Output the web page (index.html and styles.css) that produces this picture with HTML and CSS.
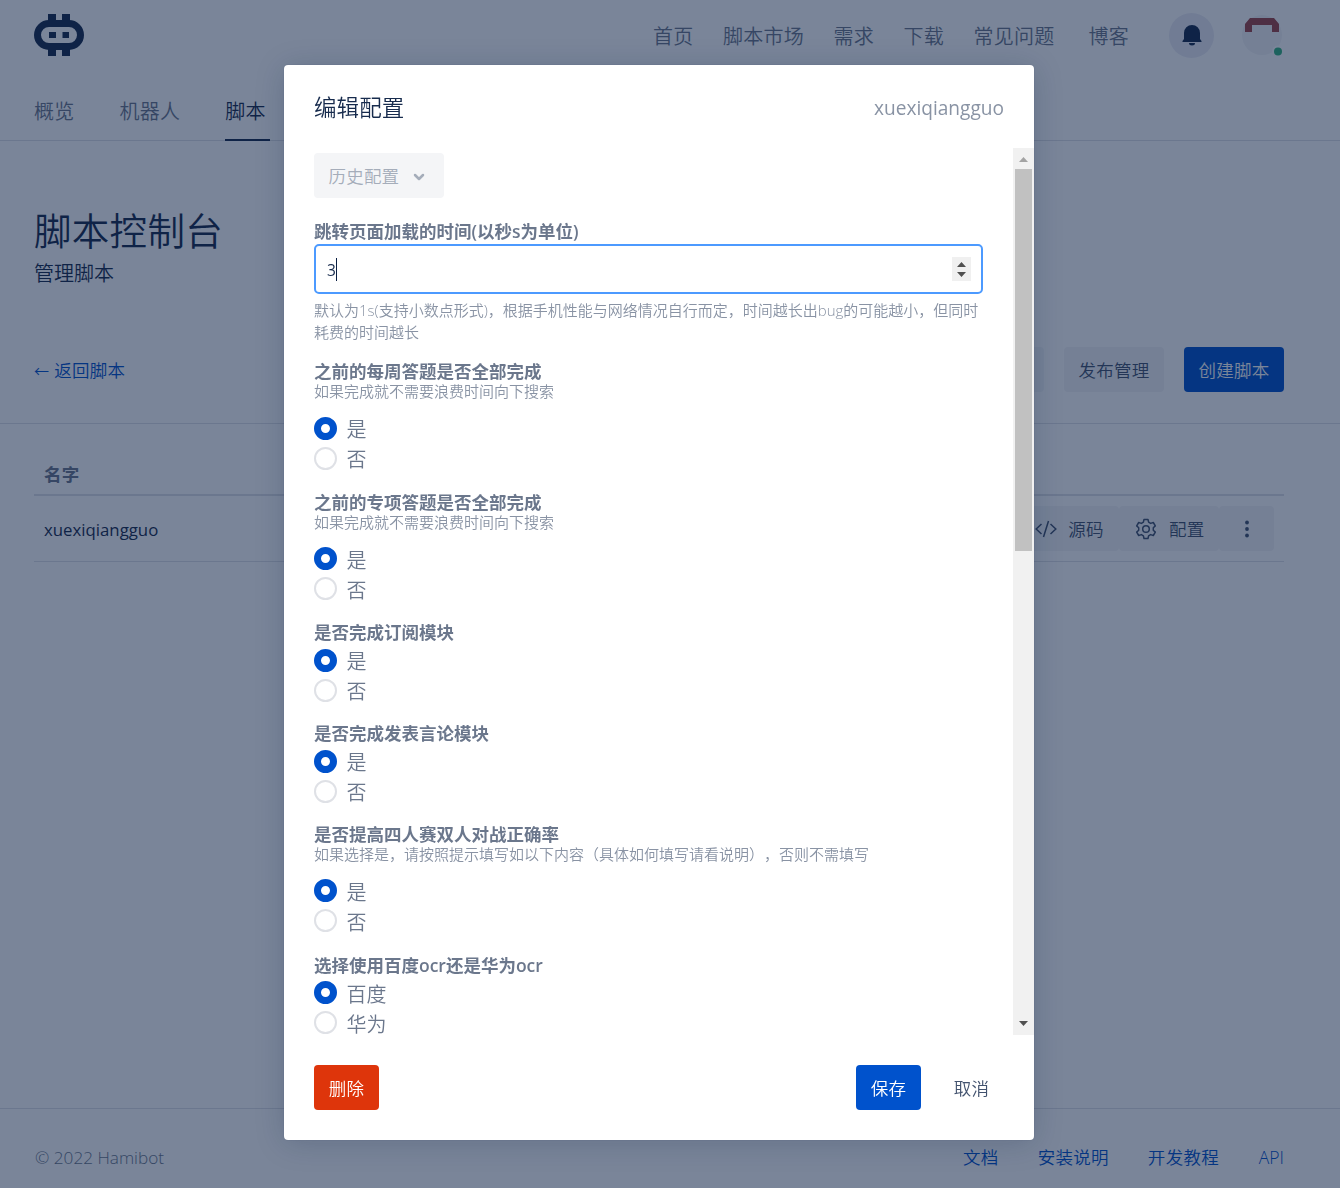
FILE: index.html
```html
<!DOCTYPE html>
<html lang="zh-CN">
<head>
<meta charset="utf-8">
<title>Hamibot</title>
<link rel="stylesheet" href="styles.css">
</head>
<body>
<div class="page">
  <header class="topbar">
    <svg class="logo" width="50" height="42" viewBox="0 0 50 42"><path fill="#172b4d" fill-rule="evenodd" d="M15 6h20a15 15 0 0 1 0 30H15a15 15 0 0 1 0-30zM15 13a8 8 0 0 0 0 16h20a8 8 0 0 0 0-16z"/><path fill="#172b4d" d="M14 0h8v7h-8zM28 0h8v7h-8zM14 35h8v7h-8zM28 35h8v7h-8zM15 18h7v6h-7zM28.500 18h6.500v6h-6.500z"/></svg>
    <nav class="mainnav">
      <a>首页</a><a>脚本市场</a><a>需求</a><a>下载</a><a>常见问题</a><a>博客</a>
    </nav>
    <div class="bell"><svg width="20" height="22" viewBox="0 0 20 22"><path fill="#172b4d" d="M10 1a8 8 0 0 0-8 8v6L.5 17v1h19v-1L18 15V9a8 8 0 0 0-8-8zM7 19h6a3 2.500 0 0 1-6 0z"/></svg></div>
    <div class="avatar"><svg width="44" height="44" viewBox="0 0 44 44"><circle cx="22" cy="22" r="20" fill="#f4f5f7"/><path fill="#a04447" d="M5 19v-8l5-6h24l5 6v8h-7v-7H12v7z"/><circle cx="38" cy="38.500" r="6" fill="#fff"/><circle cx="38" cy="38.500" r="4" fill="#36b37e"/></svg></div>
  </header>
  <nav class="tabs"><a>概览</a><a>机器人</a><a class="active">脚本</a></nav>
  <section class="hero">
    <h1>脚本控制台</h1>
    <p>管理脚本</p>
    <div class="hero-row">
      <a class="back"><span class="arrow">←</span> 返回脚本</a>
      <div class="hero-actions"><span class="btn">脚本管理</span><span class="btn">发布管理</span><span class="btn primary">创建脚本</span></div>
    </div>
  </section>
  <main class="list">
    <div class="list-head">名字</div>
    <div class="list-row">
      <span class="name">xuexiqiangguo</span>
      <div class="row-actions">
        <span class="btn code"><svg width="22" height="18" viewBox="0 0 22 18"><path fill="none" stroke="#42526e" stroke-width="1.500" d="M6.500 4L1.200 9l5.300 5M15.500 4l5.300 5-5.300 5M13.500 1L8.500 17"/></svg>源码</span>
        <span class="btn conf"><svg width="22" height="22" viewBox="0 0 22 22"><path fill="none" stroke="#42526e" stroke-width="1.500" stroke-linejoin="round" d="M9 1.500h4l.6 2.700 2 1.200 2.700-.9 2 3.400-2 1.900v2.400l2 1.900-2 3.400-2.700-.9-2 1.200-.6 2.700H9l-.6-2.700-2-1.200-2.700.9-2-3.400 2-1.900V9.800l-2-1.900 2-3.400 2.700.9 2-1.200z"/><circle cx="11" cy="11" r="3.300" fill="none" stroke="#42526e" stroke-width="1.500"/></svg>配置</span>
        <span class="btn more"><svg width="6" height="18" viewBox="0 0 6 18"><g fill="#42526e"><circle cx="3" cy="2.500" r="1.900"/><circle cx="3" cy="9" r="1.900"/><circle cx="3" cy="15.500" r="1.900"/></g></svg></span>
      </div>
    </div>
  </main>
  <footer class="footer"><span>© 2022 Hamibot</span><nav><a>文档</a><a>安装说明</a><a>开发教程</a><a>API</a></nav></footer>
</div>

<div class="backdrop">
  <div class="modal">
    <div class="modal-head"><h2>编辑配置</h2><span>xuexiqiangguo</span></div>
    <div class="modal-body">
      <form class="form">
        <span class="history">历史配置<svg width="12" height="8" viewBox="0 0 12 8"><path fill="none" stroke="#a5adba" stroke-width="2.500" stroke-linecap="round" stroke-linejoin="round" d="M2 2l4 4 4-4"/></svg></span>
        <div class="field first">
          <div class="label">跳转页面加载的时间(以秒s为单位)</div>
          <div class="number"><span class="value">3</span><svg width="19" height="24" viewBox="0 0 19 24"><path fill="#f0f0f0" d="M0 0h19v24H0z"/><path fill="#505050" d="M5 10h9L9.500 5zM5 15h9l-4.500 5z"/></svg></div>
          <div class="hint">默认为1s(支持小数点形式)，根据手机性能与网络情况自行而定，时间越长出bug的可能越小，但同时耗费的时间越长</div>
        </div>
        <div class="field">
          <div class="label">之前的每周答题是否全部完成</div><div class="help">如果完成就不需要浪费时间向下搜索</div>
          <div class="radio on"><i></i><span>是</span></div><div class="radio"><i></i><span>否</span></div>
        </div>
        <div class="field">
          <div class="label">之前的专项答题是否全部完成</div><div class="help">如果完成就不需要浪费时间向下搜索</div>
          <div class="radio on"><i></i><span>是</span></div><div class="radio"><i></i><span>否</span></div>
        </div>
        <div class="field plain">
          <div class="label">是否完成订阅模块</div>
          <div class="radio on"><i></i><span>是</span></div><div class="radio"><i></i><span>否</span></div>
        </div>
        <div class="field plain">
          <div class="label">是否完成发表言论模块</div>
          <div class="radio on"><i></i><span>是</span></div><div class="radio"><i></i><span>否</span></div>
        </div>
        <div class="field">
          <div class="label">是否提高四人赛双人对战正确率</div><div class="help">如果选择是，请按照提示填写如以下内容（具体如何填写请看说明），否则不需填写</div>
          <div class="radio on"><i></i><span>是</span></div><div class="radio"><i></i><span>否</span></div>
        </div>
        <div class="field plain">
          <div class="label">选择使用百度ocr还是华为ocr</div>
          <div class="radio on"><i></i><span>百度</span></div><div class="radio"><i></i><span>华为</span></div>
        </div>
      </form>
      <div class="scrollbar">
        <svg width="21" height="21" viewBox="0 0 21 21"><path fill="#a3a3a3" d="M6 14h9l-4.500-5z"/></svg>
        <div class="thumb"></div>
        <svg class="down" width="21" height="21" viewBox="0 0 21 21"><path fill="#505050" d="M6 7h9l-4.500 5z"/></svg>
      </div>
    </div>
    <div class="modal-foot"><span class="btn danger">删除</span><span class="btn primary save">保存</span><span class="btn subtle">取消</span></div>
  </div>
</div>
</body>
</html>
```
FILE: styles.css
```css
* { box-sizing: border-box; }
body {
  margin: 0;
  height: 1188px;
  overflow: hidden;
  background: #fff;
  color: #172b4d;
  font: 350 17.5px/25px "Open Sans", "Noto Sans CJK SC", sans-serif;
  text-spacing-trim: space-all;
}
h1, h2, p { margin: 0; font-weight: 350; }
svg { display: block; flex: none; }

.page { display: flex; flex-direction: column; height: 1188px; }
.topbar { display: flex; align-items: center; height: 70px; padding: 0 56px 0 34px; }
.logo { margin-right: auto; }
.mainnav { display: flex; gap: 29.5px; padding-top: 3px; font-size: 20px; letter-spacing: .25px; color: #6b778c; margin-right: 40px; }
.mainnav a:last-child { margin-left: 4.5px; }
.bell {
  display: flex; align-items: center; justify-content: center;
  width: 45px; height: 45px; margin-right: 26px;
  border-radius: 50%; background: #ebecf5;
}
.avatar { width: 44px; height: 44px; }
.tabs {
  display: flex; gap: 45px; height: 71px; padding-left: 34px;
  border-bottom: 1px solid #dfe1e6;
  font-size: 20px; line-height: 84px; letter-spacing: .25px; color: #6b778c;
}
.tabs .active { width: 45px; height: 71px; color: #172b4d; border-bottom: 2px solid #172b4d; }

.hero { height: 283px; padding: 64px 56px 0 34px; border-bottom: 1px solid #dfe1e6; }
.hero h1 { font-size: 37.5px; line-height: 52px; font-weight: 350; letter-spacing: .3px; }
.hero p { padding-top: 2px; font-size: 20px; line-height: 30px; }
.hero-row { display: flex; justify-content: space-between; align-items: center; margin-top: 58px; }
.back { padding-top: 2px; letter-spacing: .3px; color: #0052cc; }
.arrow { font-family: "Noto Sans CJK SC", sans-serif; font-size: 15px; }
.hero-actions { display: flex; gap: 20px; }
.btn {
  display: flex; align-items: center; justify-content: center;
  height: 45px; padding: 2px 14px 0; border-radius: 4px;
  background: #f4f5f7; color: #42526e; white-space: nowrap; letter-spacing: .3px;
}
.hero-actions .btn { width: 100px; }
.btn svg { margin-top: -2px; }
.btn.primary { background: #0052cc; color: #fff; }
.btn.danger { background: #de350b; color: #fff; }
.btn.subtle { background: none; }

.list { flex: 1; padding: 36px 56px 0 34px; }
.list-head { height: 36px; padding: 2px 10px 0; border-bottom: 2px solid #dfe1e6; font-weight: 700; letter-spacing: .25px; color: #6b778c; }
.list-row { display: flex; align-items: center; justify-content: space-between; height: 66px; padding: 0 10px; border-bottom: 1px solid #dfe1e6; }
.name { padding-top: 2px; font-weight: 400; font-size: 16.8px; }
.row-actions { display: flex; }
.code { width: 100px; gap: 11px; padding-left: 15px; }
.conf { width: 100px; gap: 11.5px; padding-left: 16px; }
.more { width: 55px; }

.footer { display: flex; align-items: center; justify-content: space-between; height: 80px; padding: 17px 56px 0 34px; border-top: 1px solid #dfe1e6; color: #6b778c; }
.footer span { padding-left: 1px; font-size: 17.2px; }
.footer nav { display: flex; gap: 39px; color: #0052cc; }
.footer a:not(:last-child) { letter-spacing: .3px; }
.footer a:nth-child(3) { margin-right: .8px; }

.backdrop {
  position: fixed; inset: 0;
  display: flex; justify-content: center; align-items: flex-start;
  padding: 65px 22px 0 0;
  background: rgba(9, 30, 66, .54);
}
.modal {
  display: flex; flex-direction: column;
  width: 750px; height: 1075px;
  border-radius: 4px; background: #fff;
  box-shadow: 0 0 1px rgba(9, 30, 66, .31), 0 3px 30px rgba(9, 30, 66, .2);
}
.modal-head { display: flex; align-items: center; justify-content: space-between; height: 83px; padding: 2px 30px 0; }
.modal-head h2 { font-size: 22.5px; line-height: 30px; letter-spacing: .1px; }
.modal-head span { padding-top: 2px; font-size: 19.1px; color: #8993a4; font-weight: 400; }
.modal-body { display: flex; height: 887px; overflow: hidden; }
.form { flex: 1; padding: 5px 30px 0; color: #6b778c; }
.history {
  display: flex; align-items: center; gap: 14px;
  width: 130px; height: 45px; padding: 2px 0 0 14.5px;
  border-radius: 4px; background: #f4f5f7; color: #a5adba; letter-spacing: .2px;
}
.field { margin-bottom: 17.9px; }
.first { margin: 23px 0 18px; }
.label { font-weight: 600; line-height: 20px; }
.number {
  display: flex; align-items: center; justify-content: space-between;
  height: 50px; margin-top: 3px; padding: 0 10px 0 11px;
  border: 2px solid #4c9aff; border-radius: 5px;
}
.value { padding-top: 1px; line-height: 22px; border-right: 1px solid #091e42; color: #172b4d; font-size: 15.5px; font-weight: 400; }
.hint { margin-top: 5px; font-size: 15px; line-height: 22px; color: #8993a4; }
.help { margin-bottom: 12px; font-size: 15px; line-height: 20px; color: #8993a4; }
.plain .label { margin-bottom: 3px; }
.help ~ .radio:last-child { margin-bottom: 18.6px; }
.radio { display: flex; gap: 9.5px; height: 30px; align-items: center; font-size: 20px; line-height: 22px; }
.radio span { padding-top: 4px; }
.radio i { width: 23px; height: 23px; border: 2px solid #dfe1e6; border-radius: 50%; }
.radio.on i { border: 7px solid #0052cc; }
.scrollbar { display: flex; flex-direction: column; width: 21px; background: #f1f1f1; }
.thumb { width: 17px; height: 382px; margin-left: 2px; background: #c1c1c1; }
.down { margin-top: auto; }
.modal-foot { display: flex; align-items: flex-start; padding: 30px 30px 0; }
.modal-foot .btn { width: 65px; }
.save { margin: 0 18px 0 auto; }
```
